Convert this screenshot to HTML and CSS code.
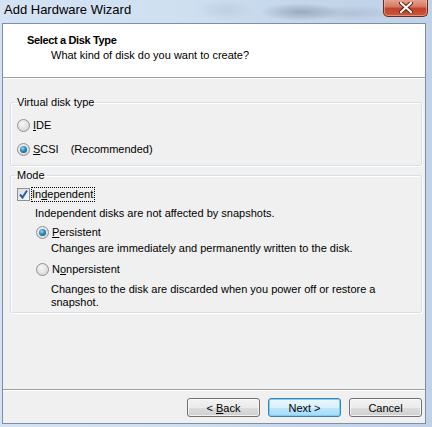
FILE: index.html
```html
<!DOCTYPE html>
<html>
<head>
<meta charset="utf-8">
<link rel="stylesheet" href="styles.css">
</head>
<body>
<div class="titlebar">
  <div class="title">Add Hardware Wizard</div>
  <div class="close">
    <svg width="14" height="11" viewBox="0 0 14 11"><path d="M2 1 L12 10 M12 1 L2 10" stroke="#5a1a10" stroke-width="4" stroke-linecap="round"/><path d="M2 1 L12 10 M12 1 L2 10" stroke="#ffffff" stroke-width="2.2" stroke-linecap="round"/></svg>
  </div>
</div>
<div class="window">
  <div class="header">
    <div class="h-title">Select a Disk Type</div>
    <div class="h-sub">What kind of disk do you want to create?</div>
  </div>
  <div class="content">
    <fieldset class="group group-type">
      <legend>Virtual disk type</legend>
      <div class="row"><span class="radio"></span><span><u>I</u>DE</span></div>
      <div class="row"><span class="radio checked"></span><span><u>S</u>CSI</span><span class="rec">(Recommended)</span></div>
    </fieldset>
    <fieldset class="group group-mode">
      <legend>Mode</legend>
      <div class="row check-row"><span class="checkbox"><svg width="11" height="11" viewBox="0 0 11 11"><path d="M2 5.5 L4.5 8.5 L9 1.5" fill="none" stroke="#2a5caa" stroke-width="2"/></svg></span><span class="focus">In<u>d</u>ependent</span></div>
      <div class="desc desc-ind">Independent disks are not affected by snapshots.</div>
      <div class="row sub-row r-pers"><span class="radio checked"></span><span><u>P</u>ersistent</span></div>
      <div class="desc desc-sub d-pers">Changes are immediately and permanently written to the disk.</div>
      <div class="row sub-row r-non"><span class="radio"></span><span>N<u>o</u>npersistent</span></div>
      <div class="desc desc-sub d-non">Changes to the disk are discarded when you power off or restore a snapshot.</div>
    </fieldset>
  </div>
  <div class="footer">
    <button class="btn">&lt; <u>B</u>ack</button>
    <button class="btn btn-default">Next &gt;</button>
    <button class="btn">Cancel</button>
  </div>
</div>
</body>
</html>
```
FILE: styles.css
```css
* { box-sizing: border-box; }
html, body { margin: 0; padding: 0; }
body {
  width: 432px;
  height: 427px;
  overflow: hidden;
  font-family: "Liberation Sans", Arial, sans-serif;
  font-size: 11px;
  color: #000;
  background:
    radial-gradient(ellipse 40px 9px at 300px 12px, rgba(120, 135, 155, 0.55), rgba(120, 135, 155, 0) 100%),
    radial-gradient(ellipse 50px 8px at 350px 13px, rgba(150, 165, 185, 0.4), rgba(150, 165, 185, 0) 100%),
    radial-gradient(ellipse 30px 10px at 225px 10px, rgba(175, 190, 210, 0.4), rgba(175, 190, 210, 0) 100%),
    linear-gradient(90deg, #d4e3f3 0%, #cfe0f1 40%, #c4d6ea 70%, #bfd2e8 100%);
}
.titlebar {
  height: 23px;
  display: flex;
  justify-content: space-between;
  align-items: flex-start;
  padding-left: 4px;
}
.title {
  font-size: 13px;
  line-height: 20px;
  color: #000;
}
.close {
  width: 45px;
  height: 18px;
  margin-top: -1px;
  margin-right: 4px;
  border: 1px solid #6b2a20;
  border-top: none;
  border-radius: 0 0 5px 5px;
  background: linear-gradient(180deg, #e7a796 0%, #d57a62 45%, #c2432a 55%, #c85a3c 100%);
  box-shadow: inset 0 0 0 1px rgba(255, 200, 180, 0.5);
  display: flex;
  align-items: center;
  justify-content: center;
}
.window {
  margin: 0 6px 0 2px;
  height: 401px;
  border: 1px solid #7d8ea6;
  background: #f0f0f0;
  display: flex;
  flex-direction: column;
}
.header {
  height: 54px;
  background: #fff;
  border-bottom: 1px solid #a0a0a0;
  padding-top: 9px;
  line-height: 14px;
}
.h-title {
  font-weight: bold;
  padding-left: 24px;
  letter-spacing: -0.35px;
}
.h-sub {
  padding-left: 48px;
  margin-top: 1px;
}
.content {
  flex: 1;
  border-top: 1px solid #fff;
  padding: 16px 3px 0 7px;
  display: flex;
  flex-direction: column;
}
.group {
  margin: 0;
  padding: 0 0 0 6px;
  border: 1px solid #d5dfe5;
  border-radius: 2px;
  box-shadow: 1px 1px 0 #fff, inset 1px 1px 0 #fff;
  min-width: 0;
}
.group legend {
  padding: 0 2px;
  margin-left: -2px;
  line-height: 14px;
}
.group-type {
  height: 71px;
}
.row {
  display: flex;
  align-items: center;
  height: 20px;
}
.group-type .row:first-of-type { margin-top: 6px; }
.group-type .row + .row { margin-top: 4px; }
.radio {
  width: 13px;
  height: 13px;
  border-radius: 50%;
  border: 1px solid #8d9094;
  background: radial-gradient(circle at 40% 35%, #f6f6f6 0%, #e0e0e0 60%, #cfcfcf 100%);
  margin-right: 3px;
  position: relative;
  flex: none;
}
.radio.checked::after {
  content: "";
  position: absolute;
  left: 2px;
  top: 2px;
  width: 7px;
  height: 7px;
  border-radius: 50%;
  background: radial-gradient(circle at 40% 35%, #9fd6ee 0%, #2a8ab8 45%, #0f4d74 100%);
}
.rec { margin-left: 12px; }
.group-mode {
  margin-top: 2px;
  height: 145px;
}
.check-row {
  height: 16px;
  margin-top: 4px;
}
.checkbox {
  width: 13px;
  height: 13px;
  border: 1px solid #8d9094;
  background: linear-gradient(135deg, #dcdcdc, #f8f8f8);
  margin-right: 1px;
  display: flex;
  align-items: center;
  justify-content: center;
  flex: none;
}
.focus {
  border: 1px dotted #000;
  padding: 0 1px 0 0;
  line-height: 13px;
}
.desc {
  line-height: 14px;
}
.desc-ind {
  margin-top: 4px;
  padding-left: 18px;
}
.sub-row {
  height: 16px;
  padding-left: 19px;
}
.r-pers { margin-top: 4px; }
.r-non { margin-top: 6px; }
.desc-sub {
  padding-left: 34px;
  padding-right: 30px;
  line-height: 13px;
}
.d-pers { margin-top: 2px; }
.d-non { margin-top: 6px; }
.footer {
  height: 34px;
  border-top: 1px solid #a0a0a0;
  box-shadow: inset 0 1px 0 #fff;
  display: flex;
  justify-content: flex-end;
  align-items: flex-start;
  gap: 8px;
  padding: 8px 3px 0 0;
}
.btn {
  width: 73px;
  height: 19px;
  padding: 0;
  font-family: "Liberation Sans", Arial, sans-serif;
  font-size: 11px;
  color: #000;
  border: 1px solid #707070;
  border-radius: 3px;
  background: linear-gradient(180deg, #f2f2f2 0%, #ebebeb 50%, #dddddd 51%, #cfcfcf 100%);
  box-shadow: inset 0 0 0 1px rgba(255, 255, 255, 0.7);
}
.btn-default {
  border-color: #3c7fb1;
  background: linear-gradient(180deg, #eaf6fd 0%, #d9f0fc 50%, #bee6fd 51%, #a7d9f5 100%);
  box-shadow: inset 0 0 0 1px #7ad0f5;
}
```
